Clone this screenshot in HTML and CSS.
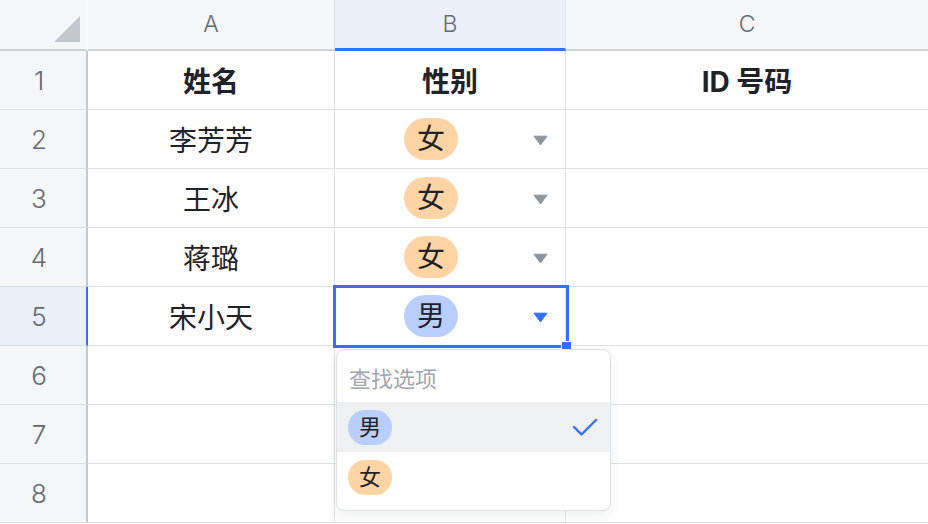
FILE: index.html
```html
<!DOCTYPE html>
<html lang="zh-CN">
<head>
<meta charset="utf-8">
<title>Sheet</title>
<link rel="stylesheet" href="styles.css">
</head>
<body>
<div class="sheet">
  <div class="grid">
    <div class="corner"><svg class="corner-tri" width="26" height="26" viewBox="0 0 26 26"><polygon points="26,0 26,26 0,26" fill="#c3c6cc"/></svg></div>
    <div class="colhead">A</div>
    <div class="colhead active">B</div>
    <div class="colhead last">C</div>

    <div class="rowhead">1</div>
    <div class="cell bold">姓名</div>
    <div class="cell bold">性别</div>
    <div class="cell bold last">ID 号码</div>

    <div class="rowhead">2</div>
    <div class="cell">李芳芳</div>
    <div class="cell select"><div class="tagwrap"><span class="tag female">女</span></div><svg class="arrow" width="15" height="11" viewBox="0 0 15 11"><path d="M1 1.2 H14 L7.5 10 Z" fill="#8f959e" stroke="#8f959e" stroke-width="1" stroke-linejoin="round"/></svg></div>
    <div class="cell last"></div>

    <div class="rowhead">3</div>
    <div class="cell">王冰</div>
    <div class="cell select"><div class="tagwrap"><span class="tag female">女</span></div><svg class="arrow" width="15" height="11" viewBox="0 0 15 11"><path d="M1 1.2 H14 L7.5 10 Z" fill="#8f959e" stroke="#8f959e" stroke-width="1" stroke-linejoin="round"/></svg></div>
    <div class="cell last"></div>

    <div class="rowhead">4</div>
    <div class="cell">蒋璐</div>
    <div class="cell select"><div class="tagwrap"><span class="tag female">女</span></div><svg class="arrow" width="15" height="11" viewBox="0 0 15 11"><path d="M1 1.2 H14 L7.5 10 Z" fill="#8f959e" stroke="#8f959e" stroke-width="1" stroke-linejoin="round"/></svg></div>
    <div class="cell last"></div>

    <div class="rowhead active">5</div>
    <div class="cell">宋小天</div>
    <div class="cell select"><div class="tagwrap"><span class="tag male">男</span></div><svg class="arrow" width="15" height="11" viewBox="0 0 15 11"><path d="M1 1.2 H14 L7.5 10 Z" fill="#3370ff" stroke="#3370ff" stroke-width="1" stroke-linejoin="round"/></svg></div>
    <div class="cell last"></div>

    <div class="rowhead">6</div>
    <div class="cell"></div>
    <div class="cell"></div>
    <div class="cell last"></div>

    <div class="rowhead">7</div>
    <div class="cell"></div>
    <div class="cell"></div>
    <div class="cell last"></div>

    <div class="rowhead">8</div>
    <div class="cell"></div>
    <div class="cell"></div>
    <div class="cell last"></div>
  </div>

  <div class="selection"><span class="handle"></span></div>

  <div class="dropdown">
    <div class="search">查找选项</div>
    <div class="option selected"><span class="tag small male">男</span><svg class="check" width="26" height="20" viewBox="0 0 26 20"><polyline points="2,9 9.5,16.5 24,2" fill="none" stroke="#3370ff" stroke-width="2.4" stroke-linecap="round" stroke-linejoin="round"/></svg></div>
    <div class="option"><span class="tag small female">女</span></div>
  </div>
</div>
</body>
</html>
```

FILE: styles.css
```css
* { box-sizing: border-box; }

html, body {
  margin: 0;
  padding: 0;
  background: #ffffff;
}

body {
  font-family: Inter, "Noto Sans CJK SC", sans-serif;
  color: #1f2329;
}

.sheet {
  position: relative;
  width: 928px;
  height: 524px;
  overflow: hidden;
  background: #ffffff;
}

.grid {
  display: grid;
  grid-template-columns: 88px 247px 231px 1fr;
  grid-template-rows: 51px repeat(8, 59px);
}

.corner {
  background: #f5f6f7;
  border-right: 2px solid #fbfbfc;
  border-bottom: 2px solid #cfd2d6;
  display: flex;
  align-items: flex-end;
  justify-content: flex-end;
  padding: 0 6px 7px 0;
}

.colhead {
  background: #f5f6f7;
  border-right: 1px solid #dee0e3;
  border-bottom: 2px solid #cfd2d6;
  display: flex;
  align-items: center;
  justify-content: center;
  font-size: 23px;
  font-weight: 300;
  color: #646a73;
  padding-bottom: 2px;
}

.colhead.active {
  background: #ebeffa;
  border-bottom: 3px solid #3370ff;
  padding-bottom: 1px;
}

.colhead.last { border-right: none; }

.rowhead {
  background: #f5f6f7;
  border-right: 2px solid #c5c8cd;
  border-bottom: 1px solid #dee0e3;
  display: flex;
  align-items: center;
  justify-content: center;
  padding-right: 8px;
  font-size: 26px;
  font-weight: 300;
  color: #646a73;
}

.rowhead.active {
  background: #ebeffa;
  border-right-color: #3370ff;
}

.cell {
  border-right: 1px solid #dee0e3;
  border-bottom: 1px solid #dee0e3;
  display: flex;
  align-items: center;
  justify-content: center;
  font-size: 28px;
  color: #1f2329;
}

.cell.last { border-right: none; }

.cell.bold { font-weight: 700; }

.cell.select {
  justify-content: flex-start;
}

.tagwrap {
  flex: 1;
  display: flex;
  justify-content: center;
}

.arrow {
  flex: none;
  margin: 2px 17px 0 6px;
}

.tag {
  display: inline-flex;
  align-items: center;
  justify-content: center;
  height: 42px;
  padding: 0 13px;
  border-radius: 21px;
  font-size: 28px;
  line-height: 1;
  color: #1f2329;
}

.tag.female { background: #fed4a4; }
.tag.male { background: #bacefd; }

.tag.small {
  height: 35px;
  padding: 0 11px;
  border-radius: 17px;
  font-size: 22px;
}

.selection {
  position: absolute;
  left: 333px;
  top: 285px;
  width: 236px;
  height: 63px;
  border: 3px solid #3370ff;
}

.handle {
  position: absolute;
  left: 225px;
  top: 53px;
  width: 11px;
  height: 9px;
  background: #3370ff;
  border: 1px solid #ffffff;
}

.dropdown {
  position: absolute;
  left: 336px;
  top: 349px;
  width: 275px;
  height: 162px;
  background: #ffffff;
  border: 1px solid #dee0e3;
  border-radius: 8px;
  box-shadow: 0 4px 12px rgba(31, 35, 41, 0.08);
  display: flex;
  flex-direction: column;
  overflow: hidden;
}

.search {
  height: 52px;
  display: flex;
  align-items: center;
  padding: 2px 0 0 12px;
  font-size: 22px;
  color: #a2a6ad;
}

.option {
  height: 50px;
  display: flex;
  align-items: center;
  justify-content: space-between;
  padding: 0 12px 0 11px;
}

.option.selected { background: #eff0f1; }

.check { flex: none; margin-top: 2px; }
```
